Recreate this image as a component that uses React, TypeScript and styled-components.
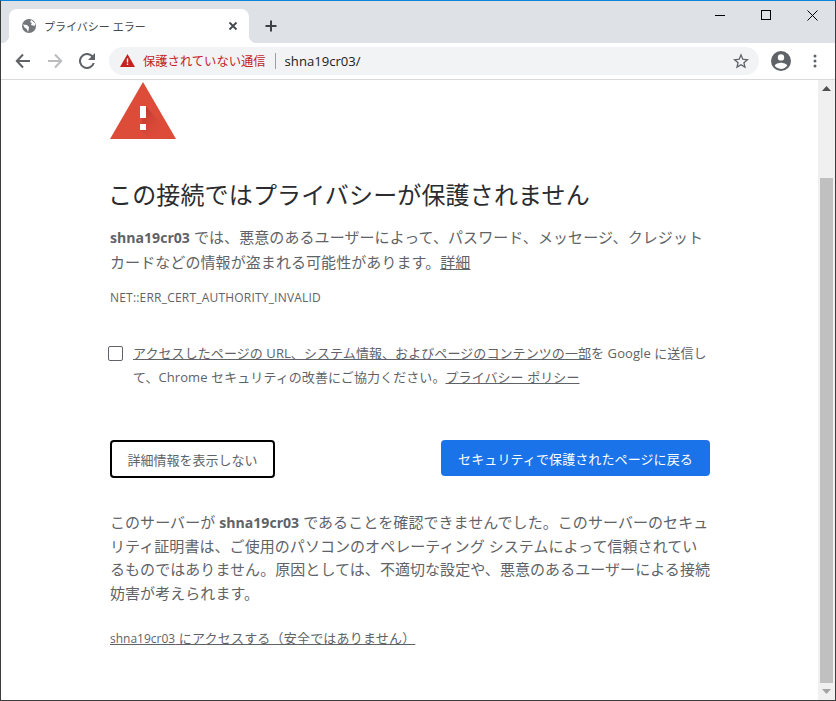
import styled, { createGlobalStyle } from 'styled-components'

const GlobalStyle = createGlobalStyle`
  html, body {
    margin: 0;
    padding: 0;
    background: #fff;
  }
`

const Window = styled.div`
  box-sizing: border-box;
  width: 836px;
  height: 701px;
  display: flex;
  flex-direction: column;
  overflow: hidden;
  border: 1px solid #3c3c3c;
  border-top-color: #0a84dc;
  font-family: "Open Sans", "Noto Sans CJK JP", sans-serif;
`

const TabStrip = styled.div`
  height: 42px;
  flex: none;
  display: flex;
  align-items: flex-end;
  padding-left: 8px;
  background: #dee1e6;
`

const Tab = styled.div`
  position: relative;
  width: 240px;
  height: 34px;
  box-sizing: border-box;
  display: flex;
  align-items: center;
  gap: 8px;
  padding: 0 8px 0 13px;
  background: #fff;
  border-radius: 8px 8px 0 0;

  &::before,
  &::after {
    content: '';
    position: absolute;
    bottom: 0;
    width: 8px;
    height: 8px;
  }

  &::before {
    left: -8px;
    background: radial-gradient(circle at 0 0, transparent 8px, #fff 8.500px);
  }

  &::after {
    right: -8px;
    background: radial-gradient(circle at 100% 0, transparent 8px, #fff 8.500px);
  }
`

const TabTitle = styled.span`
  flex: 1;
  font-size: 11px;
  color: #45494d;
  white-space: nowrap;
`

const NewTab = styled.div`
  margin: 0 0 8px 13px;
  width: 18px;
  height: 18px;
  display: flex;
`

const WindowControls = styled.div`
  margin-left: auto;
  align-self: flex-start;
  display: flex;
  gap: 35px;
  padding: 9px 17px 0 0;
`

const Toolbar = styled.div`
  height: 37px;
  flex: none;
  box-sizing: border-box;
  display: flex;
  align-items: center;
  padding: 0 0 1px 14px;
  background: #fff;
  border-bottom: 1px solid #d9d9d9;
`

const NavButton = styled.div`
  width: 16px;
  height: 16px;
  margin-right: 16px;
  display: flex;
`

const Omnibox = styled.div`
  width: 650px;
  height: 28px;
  margin-left: -2px;
  box-sizing: border-box;
  display: flex;
  align-items: center;
  padding: 0 10px 0 11px;
  background: #f1f3f4;
  border-radius: 14px;
`

const SecurityLabel = styled.span`
  margin-left: 8px;
  font-size: 12.300px;
  color: #c5221f;
  white-space: nowrap;
`

const Divider = styled.div`
  width: 1px;
  height: 16px;
  margin: 0 9px;
  background: #9aa0a6;
`

const Url = styled.span`
  flex: 1;
  font-size: 13.100px;
  color: #202124;
`

const ToolbarRight = styled.div`
  margin-left: 12px;
  display: flex;
  align-items: center;
  gap: 22px;
`

const Viewport = styled.div`
  flex: 1;
  min-height: 0;
  display: flex;
`

const Page = styled.main`
  flex: 1;
  padding: 2px 0 0 109px;
  background: #fff;
  color: #5f6368;
`

const Content = styled.div`
  width: 600px;
`

const ErrorIcon = styled.svg`
  display: block;
  width: 66px;
  height: 58px;
`

const Heading = styled.h1`
  margin: 40px 0 0 -2px;
  font-size: 24px;
  font-weight: 400;
  line-height: 30px;
  letter-spacing: 0.150px;
  color: #2b2c2f;
  white-space: nowrap;
`

const Paragraph = styled.p`
  margin: 15px 0 0;
  font-size: 15px;
  line-height: 24px;
  letter-spacing: 0.080px;
  white-space: nowrap;
`

const Host = styled.strong`
  font-size: 0.940em;
  font-weight: 700;
  letter-spacing: 0;
`

const TextLink = styled.a`
  color: inherit;
  text-decoration: underline;
`

const ErrorCode = styled.div`
  margin-top: 14px;
  font-size: 12px;
  line-height: 20px;
  letter-spacing: 0.200px;
`

const Opt = styled.label`
  margin: 33px 0 0 -2px;
  display: flex;
  gap: 10px;
  font-size: 13px;
  line-height: 24px;
  letter-spacing: 0.080px;
  white-space: nowrap;
`

const Checkbox = styled.span`
  flex: none;
  width: 15px;
  height: 15px;
  box-sizing: border-box;
  margin-top: 5px;
  background: #fff;
  border: 1px solid #5f6368;
  border-radius: 2px;
`

const Buttons = styled.div`
  margin-top: 51px;
  display: flex;
  align-items: flex-start;
  justify-content: space-between;
`

const SecondaryButton = styled.button`
  width: 165px;
  height: 38px;
  padding: 0;
  background: #fff;
  border: 2px solid #000;
  border-radius: 4px;
  color: #5f6368;
  font: inherit;
  font-size: 13px;
`

const PrimaryButton = styled.button`
  width: 269px;
  height: 36px;
  padding: 0;
  background: #1a73e8;
  border: none;
  border-radius: 4px;
  color: #fff;
  font: inherit;
  font-size: 13px;
  letter-spacing: 0.100px;
`

const Explanation = styled.p`
  margin: 33px 0 0;
  font-size: 15px;
  line-height: 23.700px;
  letter-spacing: 0.060px;
  white-space: nowrap;
`

const ProceedLink = styled.a`
  display: block;
  margin-top: 22px;
  font-size: 13px;
  line-height: 20px;
  letter-spacing: 0.200px;
  color: inherit;
  text-decoration: underline;
`

const LinkHost = styled.span`
  font-size: 12px;
  letter-spacing: 0;
`

const Scrollbar = styled.aside`
  width: 17px;
  flex: none;
  display: flex;
  flex-direction: column;
  background: #f0f0f0;
`

const ScrollArrow = styled.div`
  height: 17px;
  flex: none;
  display: flex;
  align-items: center;
  justify-content: center;
`

const ScrollTrack = styled.div`
  flex: 1;
  padding: 81px 2px 0;
  display: flex;
`

const ScrollThumb = styled.div`
  flex: 1;
  background: #c0c0c0;
`

export default function App() {
  return (
    <>
      <GlobalStyle />
      <Window>
        <TabStrip>
          <Tab>
            <svg width="14" height="14" viewBox="0 0 14 14">
              <circle cx="7" cy="7" r="7" fill="#73777b" />
              <path fill="#fff" d="M1 5.500l4 .5 2 2-.3 2.200L6 13l-1.300-3L2.500 8.500z" />
              <path fill="#fff" d="M9.300 1l-1.300 2 1.800 1-.8 2 3.500 1 .9-2.500z" />
            </svg>
            <TabTitle>プライバシー エラー</TabTitle>
            <svg width="16" height="16" viewBox="0 0 16 16">
              <path stroke="#45494d" strokeWidth="1.800" d="M4.500 4.500l7 7M11.500 4.500l-7 7" />
            </svg>
          </Tab>
          <NewTab>
            <svg width="18" height="18" viewBox="0 0 18 18">
              <path stroke="#3c4043" strokeWidth="2" d="M9 3.500v11M3.500 9h11" />
            </svg>
          </NewTab>
          <WindowControls>
            <svg width="11" height="11" viewBox="0 0 11 11">
              <path stroke="#000" d="M0 5.500h10" />
            </svg>
            <svg width="11" height="11" viewBox="0 0 11 11">
              <rect x="0.500" y="0.500" width="9" height="9" fill="none" stroke="#000" />
            </svg>
            <svg width="11" height="11" viewBox="0 0 11 11">
              <path stroke="#000" fill="none" d="M0.500 0.500l10 10M10.500 0.500l-10 10" />
            </svg>
          </WindowControls>
        </TabStrip>
        <Toolbar>
          <NavButton>
            <svg width="16" height="16" viewBox="0 0 16 16">
              <path fill="none" stroke="#5f6368" strokeWidth="2" d="M15 8H2M8 1.500L1.800 8 8 14.500" />
            </svg>
          </NavButton>
          <NavButton>
            <svg width="16" height="16" viewBox="0 0 16 16">
              <path fill="none" stroke="#babcbe" strokeWidth="2" d="M1 8h13M8 1.500L14.200 8 8 14.500" />
            </svg>
          </NavButton>
          <NavButton>
            <svg width="16" height="16" viewBox="0 0 24 24">
              <path
                fill="#5f6368"
                d="M20.500 3.500A12 12 0 1 0 23.600 15h-3.100a9 9 0 1 1-2.100-9.400L13.500 10.500H24V0z"
              />
            </svg>
          </NavButton>
          <Omnibox>
            <svg width="15" height="13" viewBox="0 0 15 13">
              <path fill="#c5221f" d="M7.500 0L15 13H0z" />
              <path fill="#fff" d="M6.800 4.500h1.400v4H6.800zM6.800 9.500h1.400v1.400H6.800z" />
            </svg>
            <SecurityLabel>保護されていない通信</SecurityLabel>
            <Divider />
            <Url>shna19cr03/</Url>
            <svg width="16" height="16" viewBox="0 0 24 24">
              <path
                fill="#5f6368"
                d="M24 9.200l-8.600-.7L12 .5 8.600 8.500 0 9.200l6.500 5.700-2 8.400L12 18.900l7.400 4.400-1.900-8.400L24 9.200zm-12 7.300l-4.500 2.700 1.200-5.100-4-3.400 5.300-.5L12 5.400l2 4.800 5.300.5-4 3.400 1.200 5.100L12 16.500z"
              />
            </svg>
          </Omnibox>
          <ToolbarRight>
            <svg width="20" height="20" viewBox="0 0 20 20">
              <path
                fill="#5f6368"
                d="M10 0a10 10 0 1 0 0 20 10 10 0 0 0 0-20zm0 3.200a3.200 3.200 0 1 1 0 6.400 3.200 3.200 0 0 1 0-6.400zM10 18a8 8 0 0 1-6.200-3c.1-2 4.100-3.200 6.200-3.200s6.100 1.200 6.200 3A8 8 0 0 1 10 18z"
              />
            </svg>
            <svg width="4" height="14" viewBox="0 0 4 14">
              <circle cx="2" cy="2" r="1.500" fill="#5f6368" />
              <circle cx="2" cy="7" r="1.500" fill="#5f6368" />
              <circle cx="2" cy="12" r="1.500" fill="#5f6368" />
            </svg>
          </ToolbarRight>
        </Toolbar>
        <Viewport>
          <Page>
            <Content>
              <ErrorIcon viewBox="0 0 66 58">
                <defs>
                  <linearGradient id="errorShadow" x1="0.150" y1="0.150" x2="0.850" y2="0.850">
                    <stop offset="0" stopColor="#b53628" stopOpacity="0.800" />
                    <stop offset="1" stopColor="#dd4b39" stopOpacity="0" />
                  </linearGradient>
                </defs>
                <path fill="#dd4b39" d="M33 0l33 57H0z" />
                <path fill="url(#errorShadow)" d="M36 24.500L55 46 45 57H41L30 47.500z" />
                <path fill="#fff" d="M30 24h6v12h-6zM30 42h6v6h-6z" />
              </ErrorIcon>
              <Heading>この接続ではプライバシーが保護されません</Heading>
              <Paragraph>
                <Host>shna19cr03</Host> では、悪意のあるユーザーによって、パスワード、メッセージ、クレジット
                <br />
                カードなどの情報が盗まれる可能性があります。<TextLink>詳細</TextLink>
              </Paragraph>
              <ErrorCode>NET::ERR_CERT_AUTHORITY_INVALID</ErrorCode>
              <Opt>
                <Checkbox />
                <span>
                  <TextLink>アクセスしたページの URL、システム情報、およびページのコンテンツの一部</TextLink>を Google に送信し
                  <br />
                  て、Chrome セキュリティの改善にご協力ください。<TextLink>プライバシー ポリシー</TextLink>
                </span>
              </Opt>
              <Buttons>
                <SecondaryButton>詳細情報を表示しない</SecondaryButton>
                <PrimaryButton>セキュリティで保護されたページに戻る</PrimaryButton>
              </Buttons>
              <Explanation>
                このサーバーが <Host>shna19cr03</Host> であることを確認できませんでした。このサーバーのセキュ
                <br />
                リティ証明書は、ご使用のパソコンのオペレーティング システムによって信頼されてい
                <br />
                るものではありません。原因としては、不適切な設定や、悪意のあるユーザーによる接続
                <br />
                妨害が考えられます。
              </Explanation>
              <ProceedLink>
                <LinkHost>shna19cr03</LinkHost> にアクセスする（安全ではありません）
              </ProceedLink>
            </Content>
          </Page>
          <Scrollbar>
            <ScrollArrow>
              <svg width="9" height="5" viewBox="0 0 9 5">
                <path fill="#505050" d="M4.500 0L9 5H0z" />
              </svg>
            </ScrollArrow>
            <ScrollTrack>
              <ScrollThumb />
            </ScrollTrack>
            <ScrollArrow>
              <svg width="9" height="5" viewBox="0 0 9 5">
                <path fill="#a3a3a3" d="M0 0h9L4.500 5z" />
              </svg>
            </ScrollArrow>
          </Scrollbar>
        </Viewport>
      </Window>
    </>
  )
}
